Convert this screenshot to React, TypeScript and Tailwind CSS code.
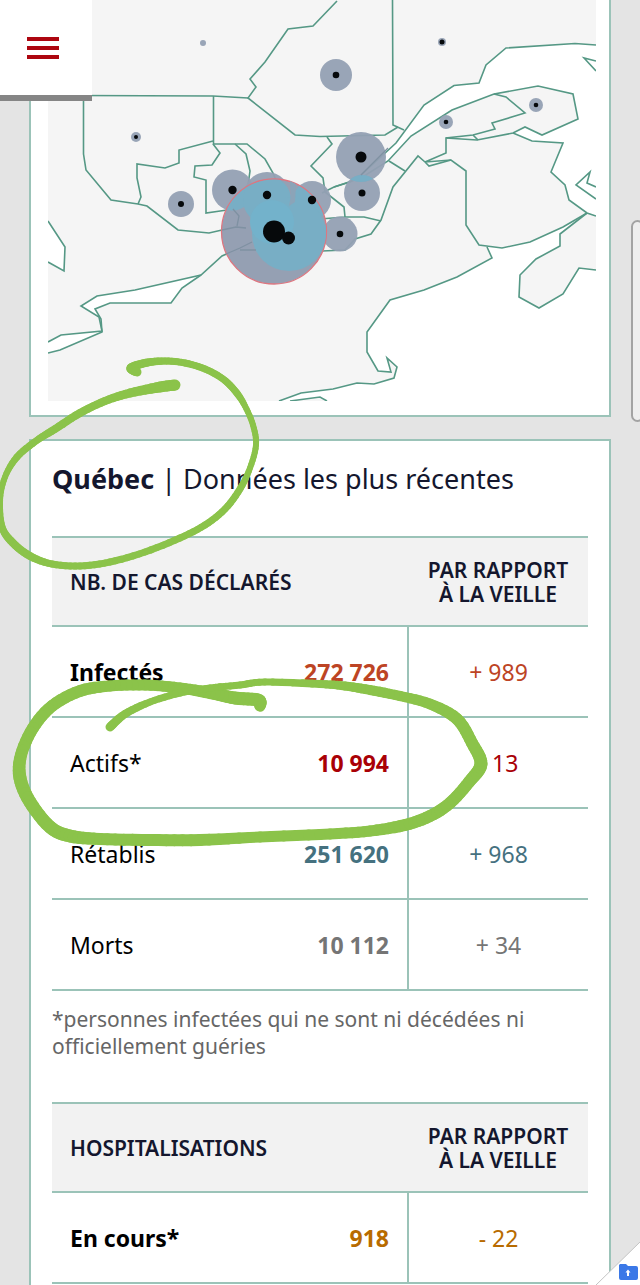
import React from "react";
import clsx from "clsx";

interface Region {
  x: number;
  y: number;
  r: number;
  dot: number;
}

interface Row {
  label: string;
  value: string;
  change: string;
  color: string;
  strong?: boolean;
}

type InkPoint = [x: number, y: number, width: number];

const regions: Region[] = [
  { x: 203, y: 43, r: 3, dot: 0 },
  { x: 442, y: 42, r: 4, dot: 2.5 },
  { x: 336, y: 75, r: 16, dot: 3.3 },
  { x: 136, y: 137, r: 5, dot: 2 },
  { x: 446, y: 122, r: 7, dot: 2.3 },
  { x: 536, y: 105, r: 7, dot: 2.3 },
  { x: 361, y: 157, r: 25, dot: 5.5 },
  { x: 362, y: 193, r: 18, dot: 3.5 },
  { x: 340, y: 234, r: 17.5, dot: 3.3 },
  { x: 181, y: 204, r: 13, dot: 3 },
  { x: 232.5, y: 190, r: 20.5, dot: 4.2 },
  { x: 267, y: 195, r: 23, dot: 4.2 },
  { x: 312, y: 200, r: 19, dot: 4.2 },
];

const waters = [
  "M48 221 65 247 64 271 48 262Z",
  "M201 275 135 290 97 296 81 306 100 317 103 331 61 335 48 342 48 353 60 350 102 332 101 319 95 309 110 303 171 303 182 288Z",
  "M596 45 575 43.5 506 48 486 65 479 83 454 85.5 424 105 396 143 361 175 388 161 411 136 452 110 494 94 538 86 573 94 578 119 542 135 525 127 513 133 532 141 563 143 551 172 565 185 569 200 587 213 596 216Z",
  "M487 245 502 248 530 242 563 227 587 213 560 234 560 246 536 259 520 275 519 297 539 308 563 294 579 268 596 270 596 401 327 401 320 397 290 401 279 401 301 393 320 391 333 389 357 383 374 384 394 378 397 367 387 358 391 372 378 371 367 352 367 332 390 300 424 290 457 277 492 258Z",
];

const borders = [
  "M48 221 65 247 64 271 48 262",
  "M48 342 61 335 102 331 99 317 81 306 97 296 135 290 201 275 222 256 240 248 255 242 M240 249 262 251 322 251",
  "M201 275 182 288 171 303 110 303 95 309 101 319 102 332 60 350 48 353",
  "M77 95.5 213 96 248 98",
  "M83.5 96V154L86 170 111 200 138 204 147 206 178 230 209 233 222 230 246 227",
  "M337 1 313 26 288 29 265 62 250 79 256 87 248 98 295 135 320 136.5 385 135 398 127",
  "M213.5 96V144H247L265 159 273 173 280 190",
  "M213 141 179 150V163L165 168 137 164V178L141 197 138 204",
  "M213 144 220 153 212 165 195 166 194 177 206 180V213L227 210 237 215 239 225",
  "M235 144 246 154 250 171 248 185",
  "M392.5 0 393 125 404 130",
  "M596 45 575 43.5 506 48 486 65 479 83 454 85.5 424 105 396 143 361 175 350 182 334 187 322 193",
  "M334 187 361 178 388 161 411 136 452 110 494 94 538 86 573 94 578 119 542 135 525 127 513 133 477 140 446 138",
  "M494 94 506 97 525 113 492 123 495 129 473 135 446 138V153L425 162 451 160 466 171V225L479 245 502 248 530 242 563 227 587 213",
  "M473 135 478 140 M425 162 429 166 451 160 M389 161 405 171",
  "M425 162 418 156 393 187 381 220 371 234 355 239 345 250 322 251",
  "M513 133 532 141 563 143 551 172 565 185 569 200 587 213 596 216",
  "M587 213 560 234V246L536 259 520 275 519 297 539 308 563 294 579 268 596 270",
  "M596 199 576 185 590 172 587 183 596 187 M596 71 584 58 596 61",
  "M487 247 492 258 457 277 424 290 390 300 367 332V352L378 371 391 372 387 358 397 367 394 378 374 384 357 383 333 389 301 393 279 401",
  "M290 401 320 397 327 401",
  "M327 137 332 144 311 166 323 178 325 192 344 207 345 217 M320 219 345 217 364 217 381 221",
];

const titleLoop: InkPoint[] = [
  [175, 385, 11], [160, 387, 11], [130, 393, 9], [105, 401, 8], [80, 413, 8], [55, 429, 8], [36, 441, 7],
  [17, 457, 7], [5, 477, 6], [0, 500, 6], [2, 527, 7], [13, 543, 8], [30, 556, 8], [52, 564, 7],
  [80, 566, 7], [110, 562, 7], [145, 552, 7], [180, 538, 7], [205, 525, 7], [225, 509, 7], [240, 489, 7],
  [250, 468, 6], [256, 445, 6], [253, 425, 6], [245, 406, 6], [236, 392, 7], [223, 379, 7], [205, 369, 7],
  [185, 363, 7], [165, 361, 7], [145, 363, 8], [131, 368, 9], [137, 372, 9],
];

const rowLoop: InkPoint[] = [
  [260, 706, 11], [258, 700, 13], [235, 698, 13], [210, 693, 12], [180, 688, 11], [145, 685, 11], [110, 686, 11],
  [80, 691, 12], [52, 706, 12], [33, 728, 12], [21, 755, 12], [20, 778, 13], [30, 802, 13], [50, 827, 13],
  [70, 836, 13], [100, 839, 12], [150, 840, 12], [200, 840, 12], [260, 837, 11], [330, 834, 11], [370, 831, 11],
  [405, 825, 12], [430, 816, 12], [450, 803, 12], [469, 782, 12], [481, 764, 13], [472, 743, 12], [457, 719, 12],
  [430, 704, 11], [400, 696, 10], [370, 690, 10], [345, 686, 9], [320, 684, 8], [265, 682, 7], [240, 685, 7],
  [210, 688, 7], [180, 693, 7], [150, 702, 7], [125, 714, 8], [110, 727, 9],
];

const cases: Row[] = [
  { label: "Infectés", value: "272 726", change: "+ 989", color: "text-[#bd4424]", strong: true },
  { label: "Actifs*", value: "10 994", change: "- 13", color: "text-[#a90006]" },
  { label: "Rétablis", value: "251 620", change: "+ 968", color: "text-[#45717f]" },
  { label: "Morts", value: "10 112", change: "+ 34", color: "text-[#757575]" },
];

const hospital: Row[] = [
  { label: "En cours*", value: "918", change: "- 22", color: "text-[#b86b00]", strong: true },
];

function RegionMap() {
  return (
    <svg viewBox="48 0 548 401" className="block w-full h-auto" role="img" aria-label="Carte des cas par région">
      <defs>
        <clipPath id="montreal">
          <circle cx="274" cy="231.5" r="52" />
        </clipPath>
        <clipPath id="saguenay">
          <circle cx="361" cy="157" r="25" />
        </clipPath>
      </defs>
      <rect x="48" width="548" height="401" fill="#f5f5f5" />
      {waters.map((d) => (
        <path key={d} d={d} fill="#fff" />
      ))}
      <g fill="none" stroke="#559885" strokeWidth="1.6">
        {borders.map((d) => (
          <path key={d} d={d} />
        ))}
      </g>
      <g fill="#94a0b3" fillOpacity="0.95">
        {regions.map((p) => (
          <circle key={`${p.x}-${p.y}`} cx={p.x} cy={p.y} r={p.r} />
        ))}
      </g>
      <circle cx="274" cy="231.5" r="52.5" fill="#95a0b3" stroke="#dd7680" strokeWidth="1.3" />
      <g clipPath="url(#montreal)" fill="#78aec5">
        <circle cx="232.5" cy="190" r="20.5" />
        <circle cx="267" cy="200" r="24" />
        <circle cx="312" cy="200" r="19" />
        <circle cx="340" cy="234" r="17.5" />
        <circle cx="289" cy="234" r="37" />
        <circle cx="272" cy="222" r="22" fill="#73b2cb" />
      </g>
      <path d="M290 181 296 184 295 202 289 206 291 195Z" fill="#8ba4b8" />
      <g clipPath="url(#saguenay)">
        <circle cx="362" cy="193" r="18" fill="#78aec5" />
      </g>
      <g fill="none" stroke="#7f91a2" strokeWidth="1.3">
        <path d="M233 209 239 216 237 226 M222 230 236 227 246 228 M226 254 240 248 252 242 M240 250 256 250" />
        <path d="M388 148 361 175" />
      </g>
      <g fill="#06090b">
        {regions.map((p) => (
          <circle key={`${p.x}-${p.y}`} cx={p.x} cy={p.y} r={p.dot} />
        ))}
        <circle cx="274" cy="231.5" r="11" />
        <circle cx="288.5" cy="238" r="6.5" />
      </g>
    </svg>
  );
}

function DataTable({ title, rows }: { title: string; rows: Row[] }) {
  return (
    <table className="w-full table-fixed border-collapse border-t-2 border-[#9bc3b8] text-[23px] leading-6">
      <colgroup>
        <col />
        <col />
        <col className="w-[180px]" />
      </colgroup>
      <thead>
        <tr className="h-[89px] border-b-2 border-[#9bc3b8] bg-[#f2f2f2] text-[21px] leading-6 text-[#14172e]">
          <th colSpan={2} scope="colgroup" className="pl-[18px] text-left font-semibold">
            {title}
          </th>
          <th scope="col" className="text-center font-semibold">
            PAR RAPPORT
            <br />À LA VEILLE
          </th>
        </tr>
      </thead>
      <tbody>
        {rows.map((row) => (
          <tr key={row.label} className="h-[91px] border-b-2 border-[#9bc3b8]">
            <th
              scope="row"
              className={clsx("pl-[18px] text-left text-black whitespace-nowrap", row.strong ? "font-bold" : "font-normal")}
            >
              {row.label}
            </th>
            <td className={clsx("pr-[18px] text-right font-bold", row.color)}>{row.value}</td>
            <td className={clsx("border-l-2 border-[#9bc3b8] text-center", row.color)}>{row.change}</td>
          </tr>
        ))}
      </tbody>
    </table>
  );
}

// Catmull-Rom through the points, sampled so the width can vary along the way
function sampleInk(points: InkPoint[], steps = 6): InkPoint[] {
  const out: InkPoint[] = [];
  for (let i = 0; i < points.length - 1; i++) {
    const p0 = points[Math.max(i - 1, 0)];
    const p1 = points[i];
    const p2 = points[i + 1];
    const p3 = points[Math.min(i + 2, points.length - 1)];
    for (let s = 0; s < steps; s++) {
      const t = s / steps;
      const at = (k: 0 | 1) =>
        0.5 *
        (2 * p1[k] +
          (p2[k] - p0[k]) * t +
          (2 * p0[k] - 5 * p1[k] + 4 * p2[k] - p3[k]) * t * t +
          (3 * p1[k] - p0[k] - 3 * p2[k] + p3[k]) * t * t * t);
      out.push([at(0), at(1), p1[2] + (p2[2] - p1[2]) * t]);
    }
  }
  out.push(points[points.length - 1]);
  return out;
}

function InkStroke({ points }: { points: InkPoint[] }) {
  const ink = sampleInk(points);
  return (
    <g>
      {ink.slice(1).map(([x, y, w], i) => (
        <line key={i} x1={ink[i][0]} y1={ink[i][1]} x2={x} y2={y} strokeWidth={w} />
      ))}
    </g>
  );
}

// Hand-drawn marker circles laid over the page
function Annotations() {
  return (
    <svg
      viewBox="0 0 640 1285"
      className="pointer-events-none absolute left-0 top-0 w-full h-auto"
      stroke="#8bc34a"
      strokeLinecap="round"
      aria-hidden="true"
    >
      <InkStroke points={titleLoop} />
      <InkStroke points={rowLoop} />
    </svg>
  );
}

export default function App() {
  return (
    <div className="relative h-screen overflow-hidden bg-[#e4e4e4] font-['Noto_Sans',sans-serif]">
      <header className="absolute left-0 top-0 z-10 border-b-[6px] border-[#858585] bg-white">
        <button type="button" aria-label="Menu" className="flex h-[95px] w-[92px] items-center justify-center pr-1.5">
          <svg viewBox="0 0 34 22" className="w-[34px]" stroke="#ad0610" strokeWidth="4" aria-hidden="true">
            <path d="M1 2H33M1 11H33M1 20H33" />
          </svg>
        </button>
      </header>

      <main className="flex flex-col gap-[22px] px-[29px]">
        <section className="border-x-2 border-b-2 border-[#9bc3b8] bg-white pb-3.5 pl-[17px] pr-[13px]">
          <RegionMap />
        </section>

        <section className="border-2 border-[#9bc3b8] bg-white px-[21px] pt-5 pb-10">
          <h2 className="mb-[39px] text-[27px] leading-9 text-[#14172e] whitespace-nowrap">
            <strong className="font-bold">Québec</strong> | Données les plus récentes
          </h2>
          <DataTable title="NB. DE CAS DÉCLARÉS" rows={cases} />
          <p className="mt-[15px] mb-[42px] text-[21px] leading-[27px] text-[#666]">
            *personnes infectées qui ne sont ni décédées ni officiellement guéries
          </p>
          <DataTable title="HOSPITALISATIONS" rows={hospital} />
        </section>
      </main>

      <Annotations />

      <div className="absolute -right-1 top-[220px] h-[202px] w-[13px] rounded-lg border-2 border-[#a3a3a3] bg-[#eee]" />

      <a href="#fichiers" aria-label="Fichiers" className="absolute bottom-0 right-0">
        <svg viewBox="0 0 44 43" className="h-[43px] w-11" aria-hidden="true">
          <path d="M44 0V43H0Z" fill="#fff" />
          <path d="M44 0 0 43" stroke="#c4c4c4" strokeWidth="1" />
          <path d="M24 22h6l2 2h8a2 2 0 0 1 2 2v10a2 2 0 0 1-2 2H25a2 2 0 0 1-2-2V23Z" fill="#3b78e7" />
          <path d="M32 27.500 34.500 30.500H33V34H31V30.500H29.500Z" fill="#fff" />
        </svg>
      </a>
    </div>
  );
}
